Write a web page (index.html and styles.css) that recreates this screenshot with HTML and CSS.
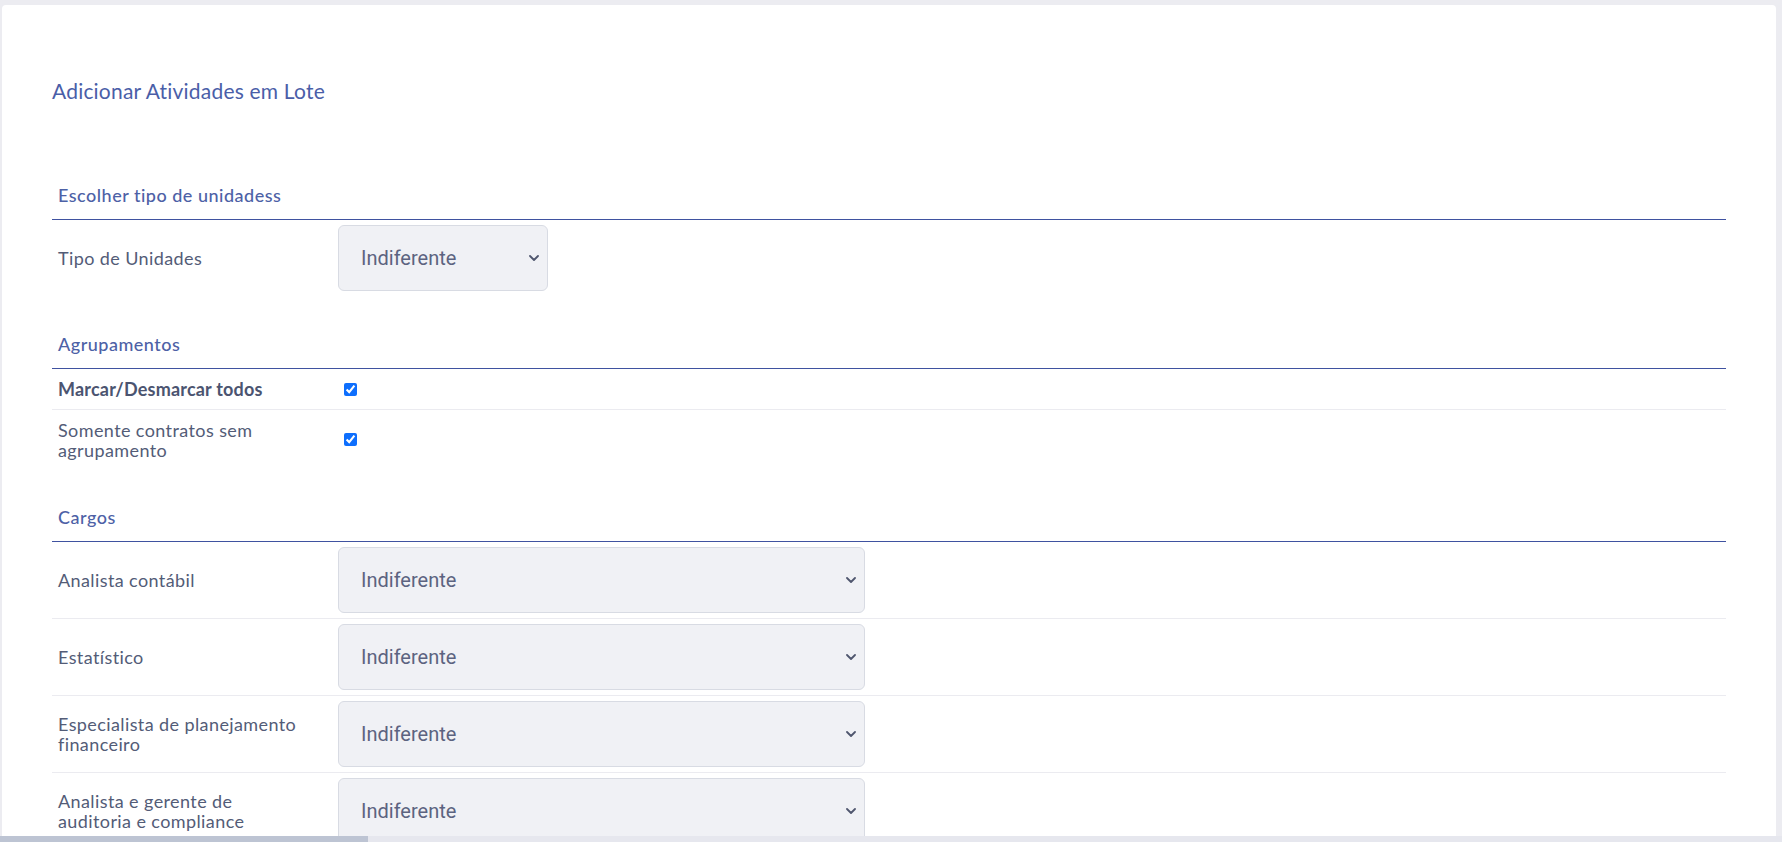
FILE: index.html
```html
<!DOCTYPE html>
<html lang="pt-BR">
<head>
<meta charset="utf-8">
<title>Adicionar Atividades em Lote</title>
<link rel="stylesheet" href="styles.css">
</head>
<body>
<div class="page">
  <div class="viewport">
    <main class="card">
      <h1 class="title">Adicionar Atividades em Lote</h1>

      <section class="group group-first">
        <div class="group-head">Escolher tipo de unidadess</div>
        <div class="row">
          <div class="label">Tipo de Unidades</div>
          <div class="field">
            <div class="select-wrap narrow">
              <select><option>Indiferente</option></select>
              <svg class="chev" viewBox="0 0 10 6"><polyline points="1,1 5,5 9,1"/></svg>
            </div>
          </div>
        </div>
      </section>

      <section class="group">
        <div class="group-head">Agrupamentos</div>
        <div class="row row-check">
          <div class="label strong">Marcar/Desmarcar todos</div>
          <div class="field"><input type="checkbox" class="check" checked></div>
        </div>
        <div class="row row-check">
          <div class="label">Somente contratos sem agrupamento</div>
          <div class="field"><input type="checkbox" class="check" checked></div>
        </div>
      </section>

      <section class="group">
        <div class="group-head">Cargos</div>
        <div class="row">
          <div class="label">Analista contábil</div>
          <div class="field">
            <div class="select-wrap">
              <select><option>Indiferente</option></select>
              <svg class="chev" viewBox="0 0 10 6"><polyline points="1,1 5,5 9,1"/></svg>
            </div>
          </div>
        </div>
        <div class="row">
          <div class="label">Estatístico</div>
          <div class="field">
            <div class="select-wrap">
              <select><option>Indiferente</option></select>
              <svg class="chev" viewBox="0 0 10 6"><polyline points="1,1 5,5 9,1"/></svg>
            </div>
          </div>
        </div>
        <div class="row">
          <div class="label">Especialista de planejamento financeiro</div>
          <div class="field">
            <div class="select-wrap">
              <select><option>Indiferente</option></select>
              <svg class="chev" viewBox="0 0 10 6"><polyline points="1,1 5,5 9,1"/></svg>
            </div>
          </div>
        </div>
        <div class="row">
          <div class="label">Analista e gerente de auditoria e compliance</div>
          <div class="field">
            <div class="select-wrap">
              <select><option>Indiferente</option></select>
              <svg class="chev" viewBox="0 0 10 6"><polyline points="1,1 5,5 9,1"/></svg>
            </div>
          </div>
        </div>
      </section>
    </main>
  </div>
  <div class="hscroll"><div class="thumb"></div></div>
</div>
</body>
</html>
```

FILE: styles.css
```css
html, body {
  margin: 0;
  height: 100%;
}

body {
  background: #ececf1;
  font-family: Lato, "Noto Sans", sans-serif;
  overflow: hidden;
}

.page {
  height: 842px;
  display: flex;
  flex-direction: column;
}

.viewport {
  flex: 1;
  min-height: 0;
  overflow: hidden;
  padding: 5px 6px 0 2px;
}

.card {
  background: #ffffff;
  border-radius: 4px 4px 0 0;
  height: 100%;
  box-sizing: border-box;
  padding: 73px 50px 0;
  overflow: hidden;
}

.title {
  margin: 0;
  font-size: 21px;
  font-weight: 400;
  line-height: 25px;
  color: #4a5ea8;
  letter-spacing: 0.2px;
}

.group {
  margin-top: 38px;
}

.group-first {
  margin-top: 82px;
}

.group-head {
  font-size: 18px;
  font-weight: 500;
  line-height: 20px;
  color: #4d61a6;
  letter-spacing: 0.5px;
  padding: 0 6px 14px;
  border-bottom: 1px solid #3f52a0;
}

.row {
  display: grid;
  grid-template-columns: 286px 1fr;
  align-items: center;
  border-bottom: 1px solid #ebebf0;
}

.row:last-child {
  border-bottom: 0;
}

.label {
  box-sizing: border-box;
  padding: 0 30px 0 6px;
  font-size: 18px;
  line-height: 20px;
  color: #535c77;
  letter-spacing: 0.4px;
}

.label.strong {
  font-weight: 700;
  color: #4b5470;
  letter-spacing: 0.2px;
}

.row-check .label {
  padding-top: 10px;
  padding-bottom: 10px;
}

.row-check:last-child .label {
  padding-bottom: 9px;
}

.field {
  padding: 5px 0;
  display: flex;
  align-items: center;
}

.check {
  width: 13px;
  height: 13px;
  margin: 0 0 0 6px;
  accent-color: #0d6efd;
}

.select-wrap {
  position: relative;
  width: 527px;
}

.select-wrap.narrow {
  width: 210px;
}

.select-wrap select {
  appearance: none;
  -webkit-appearance: none;
  display: block;
  width: 100%;
  height: 66px;
  box-sizing: border-box;
  border: 1px solid #d8dbe3;
  border-radius: 6px;
  background: #f0f1f5;
  padding: 0 40px 0 22px;
  font-family: Roboto, "Liberation Sans", sans-serif;
  font-size: 20px;
  color: #5c6380;
  outline: none;
}

.chev {
  position: absolute;
  right: 9px;
  top: 50%;
  width: 10px;
  height: 6px;
  margin-top: -3px;
  fill: none;
  stroke: #4f566e;
  stroke-width: 1.8;
  stroke-linecap: round;
  stroke-linejoin: round;
  pointer-events: none;
}

.hscroll {
  height: 6px;
  flex: none;
  background: #e6e7ee;
}

.hscroll .thumb {
  width: 368px;
  height: 100%;
  background: #bdc4d3;
}
```
